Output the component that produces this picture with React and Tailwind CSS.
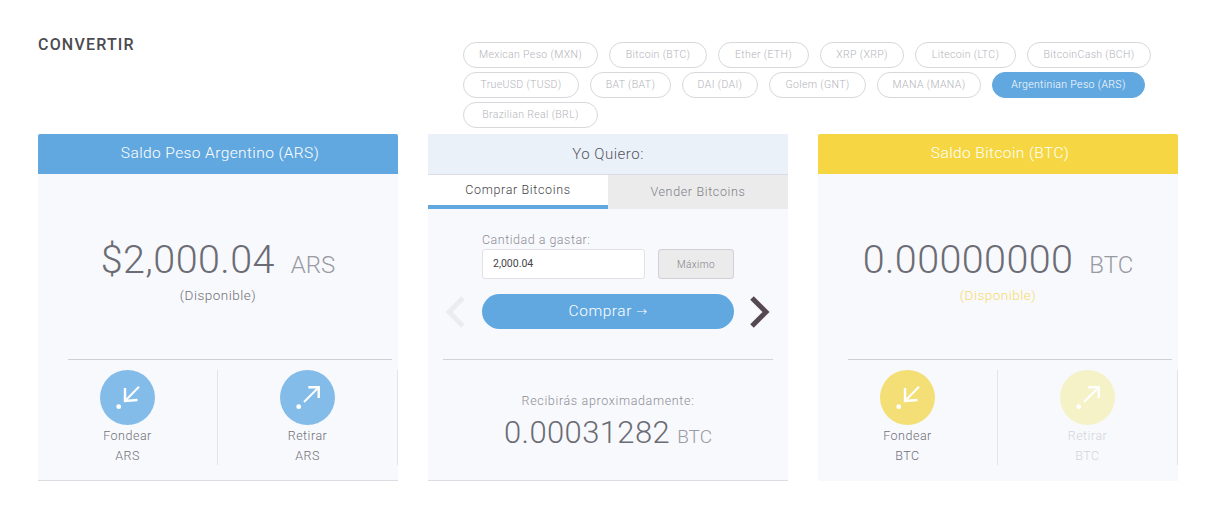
import React from 'react';

const pillRows = [
  [
    { label: 'Mexican Peso (MXN)', width: 'w-[135px]' },
    { label: 'Bitcoin (BTC)', width: 'w-[98px]' },
    { label: 'Ether (ETH)', width: 'w-[91px]' },
    { label: 'XRP (XRP)', width: 'w-[84px]' },
    { label: 'Litecoin (LTC)', width: 'w-[101px]' },
    { label: 'BitcoinCash (BCH)', width: 'w-[124px]' },
  ],
  [
    { label: 'TrueUSD (TUSD)', width: 'w-[116px]' },
    { label: 'BAT (BAT)', width: 'w-[81px]' },
    { label: 'DAI (DAI)', width: 'w-[76px]' },
    { label: 'Golem (GNT)', width: 'w-[97px]' },
    { label: 'MANA (MANA)', width: 'w-[104px]' },
    { label: 'Argentinian Peso (ARS)', width: 'w-[153px]', active: true },
  ],
  [{ label: 'Brazilian Real (BRL)', width: 'w-[135px]' }],
];

const InIcon = () => (
  <svg viewBox="0 0 55 55" className="w-[55px] h-[55px]">
    <circle cx="18.7" cy="36.7" r="2.4" fill="#fff" />
    <path d="M39 16.7 L26 30" stroke="#fff" strokeWidth="2" fill="none" />
    <path d="M25 18 L25 31 L37.5 30" stroke="#fff" strokeWidth="2.4" fill="none" />
  </svg>
);

const OutIcon = () => (
  <svg viewBox="0 0 55 55" className="w-[55px] h-[55px]">
    <circle cx="18.7" cy="36.7" r="2.4" fill="#fff" />
    <path d="M24 32 L38 18" stroke="#fff" strokeWidth="2" fill="none" />
    <path d="M28.3 17.3 L38.7 17.3 L38.7 28" stroke="#fff" strokeWidth="2.4" fill="none" />
  </svg>
);

const Action = ({ label, code, circle, faded, children }) => (
  <div className={`w-[180px] h-[95px] border-r border-[#e2e3e8] flex flex-col items-center font-light ${faded ? 'text-[#d4d5da]' : 'text-[#707078]'}`}>
    <div className={`w-[55px] h-[55px] rounded-full ${circle}`}>{children}</div>
    <div className="mt-[1px] h-[20px] leading-[20px] text-[12.5px] tracking-[0.5px]">{label}</div>
    <div className="h-[20px] leading-[20px] text-[12.5px] tracking-[0.5px]">{code}</div>
  </div>
);

const BalanceCard = ({ title, header, amount, code, noteColor, circle, fadedCircle, fadeOut, bottom }) => (
  <div className={`w-[360px] h-[347px] bg-[#f8f9fd] ${bottom}`}>
    <div className={`h-[40px] pl-[4px] rounded-t-[2px] text-white text-[15.5px] font-light tracking-[0.4px] flex items-center justify-center ${header}`}>
      {title}
    </div>
    <div className="h-[185px] pt-[60px] flex flex-col items-center">
      <div className="flex items-baseline font-light h-[52px]">
        <span className="text-[39.5px] leading-[52px] tracking-[0.4px] text-[#6c6c74]">{amount}</span>
        <span className="ml-[16px] text-[24px] text-[#9a9aa2]">{code}</span>
      </div>
      <div className={`mt-[-1px] text-[13.5px] font-light leading-[20px] tracking-[0.5px] ${noteColor}`}>(Disponible)</div>
    </div>
    <div className="ml-[30px] mr-[6px] border-t border-[#cfcfd8]" />
    <div className="mt-[10px] flex">
      <Action label="Fondear" code={code} circle={circle}><InIcon /></Action>
      <Action label="Retirar" code={code} circle={fadedCircle} faded={fadeOut}><OutIcon /></Action>
    </div>
  </div>
);

const TradeCard = () => (
  <div className="w-[360px] h-[347px] bg-[#f8f9fd] border-b border-[#dcdde2]">
    <div className="h-[41px] bg-[#ebf1f9] border-b border-[#d9dce2] text-[#55555c] text-[15px] font-light tracking-[0.5px] flex items-center justify-center">
      Yo Quiero:
    </div>
    <div className="flex h-[34px] text-[12.5px] font-light tracking-[0.65px]">
      <div className="w-[180px] bg-white border-b-4 border-[#62a8e0] text-[#44444a] flex items-center justify-center">Comprar Bitcoins</div>
      <div className="w-[180px] bg-[#ebebeb] text-[#808086] pt-[1px] flex items-center justify-center">Vender Bitcoins</div>
    </div>
    <div className="pl-[54px] pt-[22px]">
      <div className="h-[18px] leading-[18px] text-[12.5px] font-light tracking-[0.5px] text-[#8e8e96]">Cantidad a gastar:</div>
      <div className="flex gap-[13px]">
        <div className="w-[163px] h-[30px] bg-white border border-[#e2e2e6] rounded-[3px] pl-[10px] flex items-center text-[10.5px] text-[#44444a]">2,000.04</div>
        <div className="w-[76px] h-[30px] bg-[#ebebeb] border border-[#d2d2d6] rounded-[3px] flex items-center justify-center text-[10px] font-light tracking-[0.4px] text-[#808086]">Máximo</div>
      </div>
    </div>
    <div className="mt-[15px] pl-[17px] flex items-center">
      <svg viewBox="0 0 20 32" className="w-[20px] h-[32px] text-[#ececee]">
        <path d="M18 2 L4 16 L18 30" stroke="currentColor" strokeWidth="5" fill="none" />
      </svg>
      <div className="ml-[17px] w-[252px] h-[35px] rounded-full bg-[#62a8e0] text-white text-[15.5px] font-light tracking-[0.55px] flex items-center justify-center">
        Comprar <span className="ml-[4px] text-[13px] font-['DejaVu_Sans',sans-serif]">→</span>
      </div>
      <svg viewBox="0 0 20 32" className="ml-[16px] w-[20px] h-[32px] text-[#55494f]">
        <path d="M2 2 L16 16 L2 30" stroke="currentColor" strokeWidth="5" fill="none" />
      </svg>
    </div>
    <div className="mx-[15px] mt-[30px] border-t border-[#d2d2da]" />
    <div className="pt-[32px] flex flex-col items-center">
      <div className="h-[18px] leading-[18px] text-[12.5px] font-light tracking-[0.65px] text-[#8e8e96]">Recibirás aproximadamente:</div>
      <div className="mt-[3px] flex items-baseline font-light">
        <span className="text-[31px] leading-[40px] tracking-[0.4px] text-[#6c6c74]">0.00031282</span>
        <span className="ml-[7px] text-[19px] text-[#9a9aa2]">BTC</span>
      </div>
    </div>
  </div>
);

export default function App() {
  return (
    <div className="w-[1231px] h-[529px] bg-white overflow-hidden pl-[38px] font-['Roboto',sans-serif]">
      <div className="h-[134px] flex">
        <h1 className="w-[425px] pt-[34px] text-[16px] leading-[22px] font-medium tracking-[1.2px] text-[#4b4b50]">CONVERTIR</h1>
        <div className="pt-[42px] flex flex-col gap-[4px]">
          {pillRows.map((row, i) => (
            <div key={i} className="flex gap-[11px]">
              {row.map((p) => (
                <div
                  key={p.label}
                  className={`h-[26px] rounded-full border text-[10.5px] font-light tracking-[0.35px] flex items-center justify-center ${p.width} ${
                    p.active ? 'bg-[#62a8e0] border-[#62a8e0] text-white' : 'border-[#d8d8dc] text-[#b4b4ba]'
                  }`}
                >
                  {p.label}
                </div>
              ))}
            </div>
          ))}
        </div>
      </div>
      <div className="flex gap-[30px]">
        <BalanceCard
          title="Saldo Peso Argentino (ARS)"
          header="bg-[#62a8e0]"
          amount="$2,000.04"
          code="ARS"
          noteColor="text-[#707078]"
          circle="bg-[#84bce9]"
          fadedCircle="bg-[#84bce9]"
          bottom="border-b border-[#dcdde2]"
        />
        <TradeCard />
        <BalanceCard
          title="Saldo Bitcoin (BTC)"
          header="bg-[#f6d743]"
          amount="0.00000000"
          code="BTC"
          noteColor="text-[#f6d96a]"
          circle="bg-[#f3df75]"
          fadedCircle="bg-[#f4f2c6]"
          fadeOut
          bottom=""
        />
      </div>
    </div>
  );
}
